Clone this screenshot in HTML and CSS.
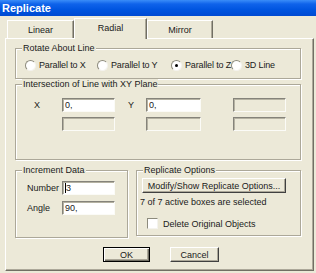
FILE: index.html
```html
<!DOCTYPE html>
<html>
<head>
<meta charset="utf-8">
<link rel="stylesheet" href="styles.css">
</head>
<body>
<div class="dialog">
  <div class="titlebar">Replicate</div>
  <div class="tabs">
    <div class="tab tab-linear">Linear</div>
    <div class="tab tab-radial active">Radial</div>
    <div class="tab tab-mirror">Mirror</div>
  </div>
  <div class="panel">
    <div class="group g-rotate">
      <span class="legend">Rotate About Line</span>
      <div class="radios">
        <label class="radio"><span class="rb"></span>Parallel to X</label>
        <label class="radio"><span class="rb"></span>Parallel to Y</label>
        <label class="radio"><span class="rb on"></span>Parallel to Z</label>
        <label class="radio"><span class="rb"></span>3D Line</label>
      </div>
    </div>
    <div class="group g-inter">
      <span class="legend">Intersection of Line with XY Plane</span>
      <div class="inter-grid">
        <span class="lbl lbl-x">X</span>
        <span class="edit">0,</span>
        <span class="lbl lbl-y">Y</span>
        <span class="edit">0,</span>
        <span class="spacer"></span>
        <span class="edit disabled"></span>
        <span class="spacer"></span>
        <span class="edit disabled"></span>
        <span class="spacer"></span>
        <span class="edit disabled"></span>
        <span class="spacer"></span>
        <span class="edit disabled"></span>
      </div>
    </div>
    <div class="row-bottom">
      <div class="group g-incr">
        <span class="legend">Increment Data</span>
        <div class="incr-grid">
          <span class="lbl">Number</span>
          <span class="edit"><span class="caret"></span>3</span>
          <span class="lbl">Angle</span>
          <span class="edit">90,</span>
        </div>
      </div>
      <div class="group g-opts">
        <span class="legend">Replicate Options</span>
        <div class="btn btn-modify">Modify/Show Replicate Options...</div>
        <div class="note">7 of 7 active boxes are selected</div>
        <label class="check"><span class="cb"></span>Delete Original Objects</label>
      </div>
    </div>
    <div class="buttons">
      <div class="btn btn-ok">OK</div>
      <div class="btn btn-cancel">Cancel</div>
    </div>
  </div>
</div>
</body>
</html>
```
FILE: styles.css
```css
* { box-sizing: border-box; }
html, body { margin: 0; padding: 0; }
body {
  width: 316px;
  height: 273px;
  overflow: hidden;
  background: #ece9d8;
  font-family: "Liberation Sans", Arial, sans-serif;
  font-size: 9px;
  color: #1a1a1a;
}
.dialog {
  width: 316px;
  height: 273px;
  background: #ece9d8;
}
.titlebar {
  height: 16px;
  padding-left: 2px;
  line-height: 16px;
  font-size: 11px;
  font-weight: bold;
  color: #fff;
  background: linear-gradient(to bottom, #3a8df8 0%, #0f63ea 25%, #0055e0 60%, #004ad2 100%);
}
.tabs {
  height: 22px;
  display: flex;
  align-items: flex-end;
  padding-left: 7px;
}
.tab {
  height: 18px;
  line-height: 19px;
  text-align: center;
  border-top: 1px solid #fff;
  border-left: 1px solid #fff;
  border-right: 1px solid #716f64;
  box-shadow: inset -1px 0 0 #aca899;
}
.tab-linear { width: 67px; }
.tab-radial { width: 73px; }
.tab-mirror { width: 66px; }
.tab.active {
  height: 21px;
  line-height: 18px;
  margin-bottom: -1px;
  position: relative;
  z-index: 1;
  background: #ece9d8;
}
.panel {
  margin-left: 5px;
  width: 309px;
  height: 233px;
  border-top: 1px solid #fff;
  border-left: 1px solid #fff;
  border-right: 1px solid #716f64;
  border-bottom: 1px solid #716f64;
  box-shadow: inset -1px -1px 0 #aca899;
  padding: 9px 0 0 9px;
}
.group {
  position: relative;
  border: 1px solid #aca899;
  box-shadow: inset 1px 1px 0 #fff, 1px 1px 0 #fff;
}
.legend {
  position: absolute;
  top: -6px;
  left: 6px;
  padding: 0 1px;
  line-height: 11px;
  background: #ece9d8;
}
.g-rotate {
  width: 286px;
  height: 31px;
  padding: 10px 0 0 9px;
}
.radios {
  display: grid;
  grid-template-columns: 72px 74px 60px auto;
  height: 12px;
}
.radio {
  display: flex;
  align-items: center;
  white-space: nowrap;
  letter-spacing: -0.15px;
}
.rb {
  width: 11px;
  height: 11px;
  margin-right: 3px;
  border-radius: 50%;
  background: #fff;
  border: 1px solid;
  border-color: #8d8b7d #f4f3ee #f4f3ee #8d8b7d;
  position: relative;
  flex: none;
}
.rb.on::after {
  content: "";
  position: absolute;
  left: 3px;
  top: 3px;
  width: 3px;
  height: 3px;
  border-radius: 50%;
  background: #000;
}
.g-inter {
  width: 286px;
  height: 76px;
  margin-top: 5px;
  padding-top: 13px;
}
.inter-grid {
  display: grid;
  grid-template-columns: 46px 53px 31px 55px 32px 53px;
  grid-template-rows: 14px 14px;
  row-gap: 5px;
}
.lbl {
  display: flex;
  align-items: center;
  white-space: nowrap;
}
.lbl-x { padding-left: 18px; }
.lbl-y { padding-left: 13px; }
.edit {
  display: flex;
  align-items: center;
  padding-left: 2px;
  background: #fff;
  border: 1px solid;
  border-color: #85837a #fbfbf7 #fbfbf7 #85837a;
  box-shadow: inset 1px 1px 0 #b5b2a2;
  white-space: nowrap;
}
.edit.disabled {
  background: #ece9d8;
}
.caret {
  width: 1px;
  height: 10px;
  background: #000;
}
.row-bottom {
  display: flex;
  align-items: flex-start;
  margin-top: 10px;
}
.g-incr {
  width: 113px;
  height: 68px;
  padding: 10px 0 0 11px;
}
.incr-grid {
  display: grid;
  grid-template-columns: 35px 53px;
  grid-template-rows: 14px 14px;
  row-gap: 6px;
}
.g-opts {
  width: 165px;
  height: 66px;
  margin-left: 8px;
  padding-top: 7px;
}
.btn {
  display: flex;
  align-items: center;
  justify-content: center;
  height: 15px;
  background: #ece9d8;
  border: 1px solid;
  border-color: #fff #404040 #404040 #fff;
  box-shadow: inset -1px -1px 0 #aca899;
  white-space: nowrap;
}
.btn-modify {
  width: 144px;
  margin-left: 5px;
}
.note {
  margin: 3px 0 0 3px;
  line-height: 12px;
  white-space: nowrap;
}
.check {
  display: flex;
  align-items: center;
  height: 11px;
  margin: 10px 0 0 10px;
  white-space: nowrap;
}
.cb {
  width: 11px;
  height: 11px;
  margin-right: 5px;
  background: #fff;
  border: 1px solid;
  border-color: #8d8b7d #f4f3ee #f4f3ee #8d8b7d;
  flex: none;
}
.buttons {
  display: flex;
  margin-top: 9px;
  padding-left: 88px;
}
.btn-ok {
  width: 47px;
  border: 1px solid #000;
  box-shadow: inset 1px 1px 0 #fff, inset -1px -1px 0 #716f64, inset -2px -2px 0 #aca899;
}
.btn-cancel {
  width: 49px;
  margin-left: 20px;
}
```
